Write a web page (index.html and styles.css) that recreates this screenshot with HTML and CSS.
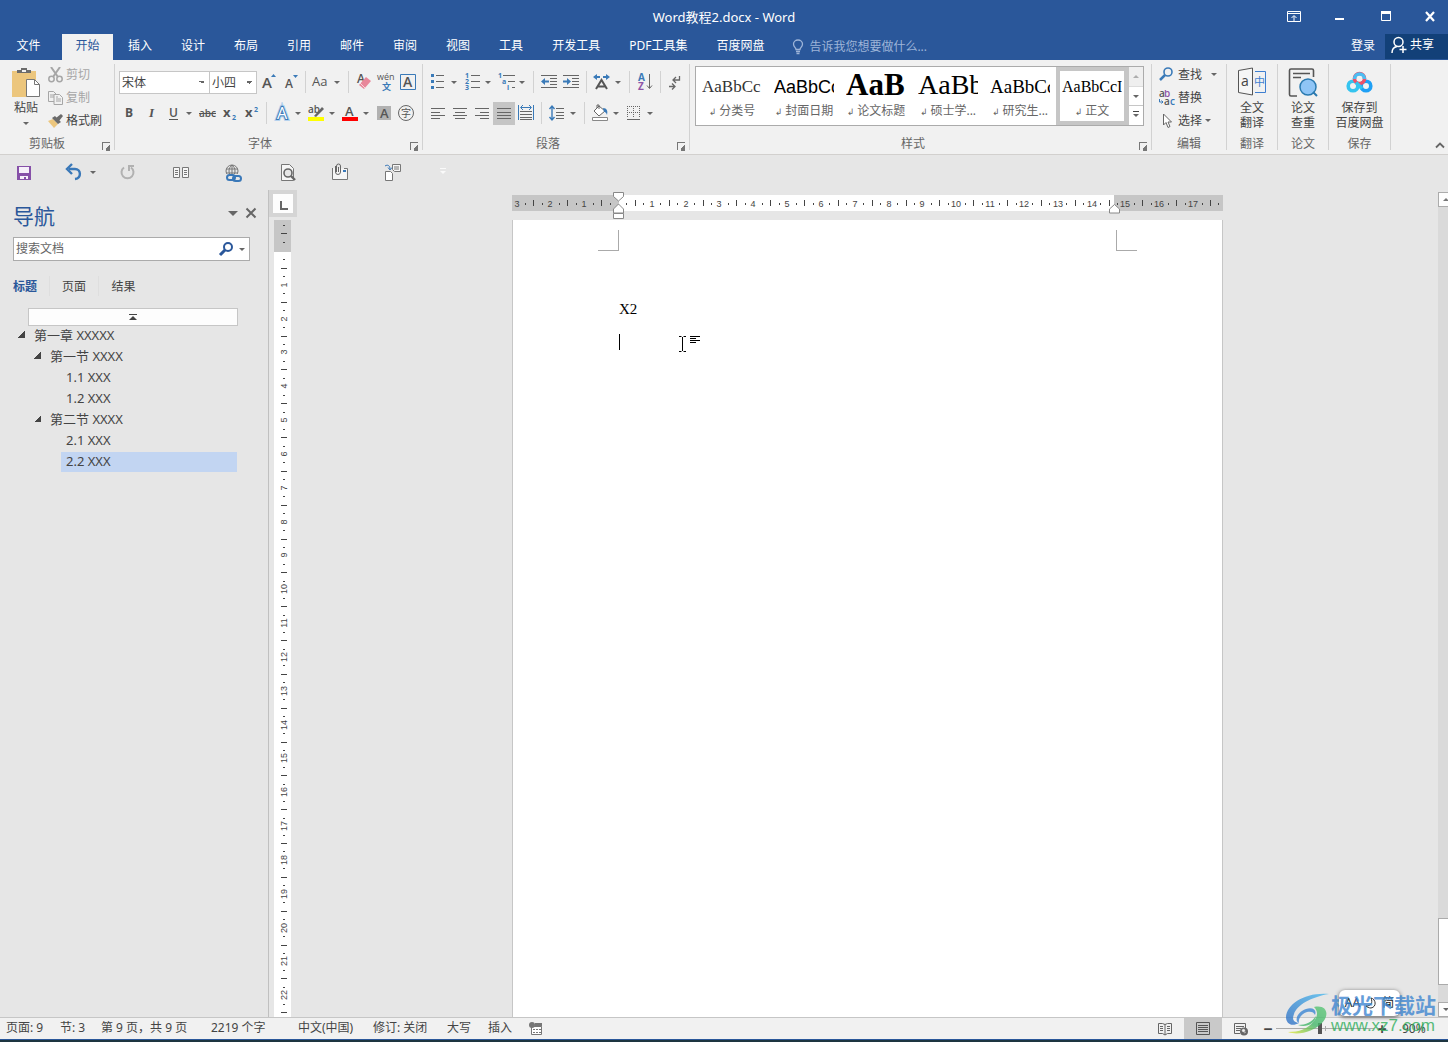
FILE: index.html
```html
<!DOCTYPE html>
<html lang="zh-CN">
<head>
<meta charset="utf-8">
<title>Word教程2.docx - Word</title>
<link rel="stylesheet" href="styles.css">
</head>
<body>
<header class="app-head">
  <div class="titlebar">
    <h1 class="doc-title">Word教程2.docx - Word</h1>
    <div class="win-buttons">
      <button class="win" aria-label="功能区显示选项"><svg width="14" height="12"><path d="M.5 .5h13v10h-13zM.5 2.5h13M7 10V5M4.500 7 7 4.500 9.500 7" fill="none" stroke="#fff"/></svg></button>
      <button class="win" aria-label="最小化"><svg width="10" height="12"><path d="M0 7h9v2H0z" fill="#fff"/></svg></button>
      <button class="win" aria-label="最大化"><svg width="11" height="12"><path d="M.5 .5h9v9h-9z" fill="none" stroke="#fff"/><path d="M0 0h10v3H0z" fill="#fff"/></svg></button>
      <button class="win" aria-label="关闭"><svg width="11" height="12"><path d="m1 1 8 9M9 1 1 10" stroke="#fff" stroke-width="2.200"/></svg></button>
    </div>
  </div>
  <nav class="tabs">
    <button class="tab tab-file">文件</button><button class="tab active">开始</button><button class="tab">插入</button><button class="tab">设计</button><button class="tab">布局</button><button class="tab">引用</button><button class="tab">邮件</button><button class="tab">审阅</button><button class="tab">视图</button><button class="tab">工具</button><button class="tab">开发工具</button><button class="tab">PDF工具集</button><button class="tab">百度网盘</button>
    <label class="tell"><svg width="12" height="16"><path d="M4 10.500C4 8.500 1.500 8 1.500 5a4.500 4 0 0 1 9 0c0 3-2.500 3.500-2.500 5.500zM4 12.500h4M4.500 14.500h3" fill="none" stroke="#9db4d8" stroke-width="1.300"/></svg><input type="text" placeholder="告诉我您想要做什么..."></label>
    <button class="tab login">登录</button>
    <button class="share"><svg width="16" height="18"><circle cx="7.500" cy="6" r="4.500" fill="none" stroke="#fff" stroke-width="1.500"/><path d="M1 17c0-4 2-6 5-6.500M12 10v7M8.500 13.500h7" fill="none" stroke="#fff" stroke-width="1.500"/></svg>共享</button>
  </nav>
</header>

<section class="ribbon">
  <div class="group g-clip">
    <div class="group-body clip">
      <button class="paste"><svg width="28" height="32"><path d="M0 4h24v26H0z" fill="#ecc67d"/><path d="M5 6V3h4V1h6v2h4v3z" fill="#6b6b6b"/><path d="M10 3h4v2h-4z" fill="#f1f1f1"/><path d="M14.500 12.500h8l5 5v12h-13z" fill="#fff" stroke="#777"/><path d="M22.500 12.500v5h5" fill="none" stroke="#777"/></svg><span>粘贴</span><i class="caret"></i></button>
      <div class="stack">
        <button class="line off"><svg width="15" height="16"><path d="m3 0 7 10M12 0 5 10" stroke="#a6a6a6" stroke-width="2"/><circle cx="3.500" cy="12" r="2.700" fill="none" stroke="#a6a6a6" stroke-width="1.500"/><circle cx="11.500" cy="12" r="2.700" fill="none" stroke="#a6a6a6" stroke-width="1.500"/></svg>剪切</button>
        <button class="line off"><svg width="15" height="16"><path d="M.5 1.500h5l3 3v7h-8zM2 5h4M2 7h4" fill="#f1f1f1" stroke="#a6a6a6"/><path d="M6 4.500h5.500l3 3v7H6zM8 9h5M8 11h5M8 7h2" fill="#f1f1f1" stroke="#a6a6a6"/></svg>复制</button>
        <button class="line"><svg width="15" height="16"><path d="m0 8 5-2 5 5-4 4z" fill="#ecc67d"/><path d="m4 5 3-2 6 6-3 2zM8 5l5-4 2 2-4 5z" fill="#6b6b6b"/></svg>格式刷</button>
      </div>
    </div>
    <footer class="cap">剪贴板<button class="launch" aria-label="剪贴板选项"></button></footer>
  </div>

  <div class="group g-font">
    <div class="group-body rows">
      <div class="row">
        <select class="combo c-name" aria-label="字体"><option>宋体</option></select><select class="combo c-size" aria-label="字号"><option>小四</option></select>
        <button class="ib" aria-label="增大字号"><svg class="i"><text x="5" y="17" class="gl" font-size="15">A</text><path d="m14 6 2.500-3L19 6z" fill="#3a7ab8"/></svg></button>
        <button class="ib" aria-label="减小字号"><svg class="i"><text x="6" y="17" class="gl" font-size="12">A</text><path d="m14 4 2.500 3L19 4z" fill="#3a7ab8"/></svg></button>
        <i class="sep"></i>
        <button class="ib" aria-label="更改大小写"><svg class="i"><text x="2" y="15" class="gl thin" font-size="13">Aa</text></svg></button><i class="dd"></i>
        <i class="sep"></i>
        <button class="ib" aria-label="清除格式"><svg class="i"><text x="4" y="12" class="gl" font-size="12">A</text><path d="m6 14 7-8 5 4-7 8z" fill="#e8879a"/><path d="m7 12 5 5" stroke="#f8d5dc"/></svg></button>
        <button class="ib" aria-label="拼音指南"><svg class="i"><text x="2" y="9" class="gl thin" font-size="9">wén</text><text x="7" y="19" font-size="9" font-weight="700" fill="#3a7ab8">文</text></svg></button>
        <button class="ib" aria-label="字符边框"><svg class="i"><path d="M3.500 3.500h15v15h-15z" fill="none" stroke="#3a7ab8"/><text x="6" y="16" class="gl" font-size="14">A</text></svg></button>
      </div>
      <div class="row">
        <button class="ib" aria-label="加粗"><svg class="i"><text x="7" y="15" class="gl heavy" font-size="12">B</text></svg></button>
        <button class="ib" aria-label="倾斜"><svg class="i"><text x="9" y="15" class="gl serif" font-size="13">I</text></svg></button>
        <button class="ib" aria-label="下划线"><svg class="i"><text x="7" y="15" class="gl" font-size="12">U</text><path d="M7 17.500h9" stroke="#555"/></svg></button><i class="dd"></i>
        <button class="ib" aria-label="删除线"><svg class="i"><text x="3" y="15" class="gl" font-size="10">abc</text><path d="M3 11.500h17" stroke="#555"/></svg></button>
        <button class="ib" aria-label="下标"><svg class="i"><text x="5" y="15" class="gl heavy" font-size="13">x</text><text x="14" y="18" font-size="7" font-weight="700" fill="#3a7ab8">2</text></svg></button>
        <button class="ib" aria-label="上标"><svg class="i"><text x="5" y="15" class="gl heavy" font-size="13">x</text><text x="14" y="10" font-size="7" font-weight="700" fill="#3a7ab8">2</text></svg></button>
        <i class="sep"></i>
        <button class="ib" aria-label="文本效果"><svg class="i"><text x="6" y="17" font-size="16" fill="#fff" stroke="#b5d2ee" stroke-width="4" paint-order="stroke">A</text><text x="6" y="17" font-size="16" fill="#fff" stroke="#3a7ab8" stroke-width="2" paint-order="stroke">A</text></svg></button><i class="dd"></i>
        <button class="ib" aria-label="突出显示"><svg class="i"><text x="3" y="11" class="gl" font-size="10">ab</text><path d="m9 14 8-9 2 2-8 8z" fill="#666"/><path d="M3 15h16v4H3z" fill="#ff0"/></svg></button><i class="dd"></i>
        <button class="ib" aria-label="字体颜色"><svg class="i"><text x="6" y="14" class="gl" font-size="13">A</text><path d="M3 15h16v4H3z" fill="red"/></svg></button><i class="dd"></i>
        <button class="ib" aria-label="字符底纹"><svg class="i"><path d="M4 4h14v14H4z" fill="#b1b1b1"/><text x="7" y="16" class="gl" font-size="13">A</text></svg></button>
        <button class="ib" aria-label="带圈字符"><svg class="i"><circle cx="11" cy="11" r="7.500" fill="none" stroke="#666"/><text x="6" y="15" class="gl thin" font-size="10">字</text></svg></button>
      </div>
    </div>
    <footer class="cap">字体<button class="launch" aria-label="字体选项"></button></footer>
  </div>

  <div class="group g-para">
    <div class="group-body rows">
      <div class="row">
        <button class="ib" aria-label="项目符号"><svg class="i"><path d="M4 3h3v3H4zM4 9h3v3H4zM4 15h3v3H4z" fill="#3a7ab8"/><path d="M9 4.500h8M9 10.500h8M9 16.500h8" stroke="#666"/></svg></button><i class="dd"></i>
        <button class="ib" aria-label="编号"><svg class="i"><g font-size="7" font-weight="700" fill="#3a7ab8"><text x="4" y="7">1</text><text x="4" y="13">2</text><text x="4" y="19">3</text></g><path d="M10 4.500h9M10 10.500h9M10 16.500h9" stroke="#666"/></svg></button><i class="dd"></i>
        <button class="ib" aria-label="多级列表"><svg class="i"><g font-size="7" font-weight="700" fill="#3a7ab8"><text x="3" y="7">1</text><text x="7" y="13">a</text><text x="12" y="19">i</text></g><path d="M8 4.500h12M13 10.500h7M17 16.500h3" stroke="#666"/></svg></button><i class="dd"></i>
        <i class="sep"></i>
        <button class="ib" aria-label="减少缩进"><svg class="i"><path d="M3 4.500h16M12 7.500h7M12 10.500h7M12 13.500h7M3 16.500h16" stroke="#666"/><path d="M3 10.500 7 7v2.500h4v2H7V14z" fill="#3a7ab8"/></svg></button>
        <button class="ib" aria-label="增加缩进"><svg class="i"><path d="M3 4.500h16M12 7.500h7M12 10.500h7M12 13.500h7M3 16.500h16" stroke="#666"/><path d="M11 10.500 7 7v2.500H3v2h4V14z" fill="#3a7ab8"/></svg></button>
        <i class="sep"></i>
        <button class="ib" aria-label="中文版式"><svg class="i"><path d="m5 18 5.500-9 5.500 9M7 15.500h7" fill="none" stroke="#555" stroke-width="2"/><path d="m2 6 4-3v2h3v2H6v2zM19 6l-4-3v2h-3v2h3v2z" fill="#3a7ab8"/></svg></button><i class="dd"></i>
        <i class="sep"></i>
        <button class="ib" aria-label="排序"><svg class="i"><text x="4" y="10" font-size="10" font-weight="700" fill="#3a7ab8">A</text><text x="4" y="19" font-size="10" font-weight="700" fill="#8f55a8">Z</text><path d="M15.500 3v14M13 14.500l2.500 3 2.500-3" fill="none" stroke="#666"/></svg></button>
        <i class="sep"></i>
        <button class="ib" aria-label="显示编辑标记"><svg class="i"><path d="M14.500 5v4H8M11 6 8 9l3 3M4 15.500h6M7 12.500l3 3-3 3" fill="none" stroke="#666" stroke-width="1.300"/></svg></button>
      </div>
      <div class="row">
        <button class="ib" aria-label="左对齐"><svg class="i"><path d="M4 6.500h14M4 10.500h9M4 13.500h14M4 16.500h9" stroke="#666"/></svg></button>
        <button class="ib" aria-label="居中"><svg class="i"><path d="M4 6.500h14M6 10.500h10M4 13.500h14M6 16.500h10" stroke="#666"/></svg></button>
        <button class="ib" aria-label="右对齐"><svg class="i"><path d="M4 6.500h14M9 10.500h9M4 13.500h14M9 16.500h9" stroke="#666"/></svg></button>
        <button class="ib on" aria-label="两端对齐"><svg class="i"><path d="M4 6.500h14M4 10.500h14M4 13.500h14M4 16.500h14" stroke="#666"/></svg></button>
        <button class="ib" aria-label="分散对齐"><svg class="i"><path d="M3.500 3v15M18.500 3v15" stroke="#3a7ab8"/><path d="M5 9.500h12M5 12.500h12M5 15.500h12M5 17.500h12" stroke="#666"/><path d="M6 5.500h10M8 3 5.500 5.500 8 8M14 3l2.500 2.500L14 8" fill="none" stroke="#3a7ab8"/></svg></button>
        <i class="sep"></i>
        <button class="ib" aria-label="行距"><svg class="i"><path d="M10 6.500h8M10 10.500h8M10 13.500h8M10 16.500h8" stroke="#666"/><path d="M6 4v14M3.500 7 6 4l2.500 3M3.500 15 6 18l2.500-3" fill="none" stroke="#3a7ab8" stroke-width="1.400"/></svg></button><i class="dd"></i>
        <i class="sep"></i>
        <button class="ib" aria-label="底纹"><svg class="i"><path d="m5 9 5-5 6 5-6 5z" fill="#fff" stroke="#666"/><path d="M8 6V3h2v4" fill="none" stroke="#666"/><path d="M14 6c4 0 5 3 4 7-1-3-2-3-3-3z" fill="#3a7ab8"/><path d="M3.500 15.500h15v3h-15z" fill="#fff" stroke="#888"/></svg></button><i class="dd"></i>
        <button class="ib" aria-label="边框"><svg class="i"><path d="M4 4.500h13M4 10.500h13M4.500 4v12M10.500 4v12M16.500 4v12" stroke="#666" stroke-dasharray="1 1"/><path d="M4 17.500h13" stroke="#666"/></svg></button><i class="dd"></i>
      </div>
    </div>
    <footer class="cap">段落<button class="launch" aria-label="段落选项"></button></footer>
  </div>

  <div class="group g-style">
    <div class="gallery">
      <button class="style"><span class="pv p1">AaBbCc</span><span class="nm"><b>↲</b>分类号</span></button>
      <button class="style"><span class="pv p2">AaBbCc</span><span class="nm"><b>↲</b>封面日期</span></button>
      <button class="style"><span class="pv p3">AaB</span><span class="nm"><b>↲</b>论文标题</span></button>
      <button class="style"><span class="pv p4">AaBb</span><span class="nm"><b>↲</b>硕士学...</span></button>
      <button class="style"><span class="pv p5">AaBbCc</span><span class="nm"><b>↲</b>研究生...</span></button>
      <button class="style chosen"><span class="pv p6">AaBbCcI</span><span class="nm"><b>↲</b>正文</span></button>
      <div class="gal-nav"><button class="dim" aria-label="上一行"><i class="caret up"></i></button><button aria-label="下一行"><i class="caret"></i></button><button aria-label="更多样式"><i class="caret bar"></i></button></div>
    </div>
    <footer class="cap">样式<button class="launch" aria-label="样式选项"></button></footer>
  </div>

  <div class="group g-edit">
    <div class="group-body stack">
      <button class="line"><svg width="16" height="16"><circle cx="9" cy="5" r="4" fill="none" stroke="#3a7ab8" stroke-width="1.600"/><path d="m6 8-5 5" stroke="#3a7ab8" stroke-width="2.500"/></svg>查找<i class="caret far"></i></button>
      <button class="line"><svg width="16" height="16"><g font-size="10" font-weight="600"><text x="0" y="7" fill="#555">a</text><text x="5" y="7" fill="#8f55a8">b</text><text x="5" y="15" fill="#555">a</text><text x="11" y="15" fill="#3a7ab8">c</text></g><path d="M.5 9v3H4M2.500 10.500 4 12l-1.500 1.500" fill="none" stroke="#3a7ab8"/></svg>替换</button>
      <button class="line"><svg width="16" height="16"><path d="M4.500 1v11l2.500-2.500 2 5 2-1-2-4.500h3.500z" fill="#fff" stroke="#666"/></svg>选择<i class="caret"></i></button>
    </div>
    <footer class="cap">编辑</footer>
  </div>
  <div class="group g-tool">
    <button class="big"><svg width="30" height="30"><path d="M1.500 3.500 15.500 1v27l-14-2.500z" fill="#f6f6f6" stroke="#555"/><text x="4" y="19" font-size="14" fill="#444">a</text><path d="M18 4.500h10.500v21H18" fill="none" stroke="#3f7fd0"/><text x="17" y="19" font-size="11" fill="#3f7fd0">中</text></svg><span>全文<br>翻译</span></button>
    <footer class="cap">翻译</footer>
  </div>
  <div class="group g-tool">
    <button class="big"><svg width="30" height="30"><path d="M9 29H3a1.500 1.500 0 0 1-1.500-1.500v-24A1.500 1.500 0 0 1 3 2h21a1.500 1.500 0 0 1 1.500 1.500V10M5 6.500h17M5 10.500h8" fill="none" stroke="#555" stroke-width="1.600"/><circle cx="20" cy="20" r="8" fill="#8fc5f6" stroke="#2a7ab0" stroke-width="1.500"/><path d="m25 25 4 4" stroke="#2a7ab0" stroke-width="2"/></svg><span>论文<br>查重</span></button>
    <footer class="cap">论文</footer>
  </div>
  <div class="group g-save">
    <button class="big"><svg width="30" height="30"><g fill="none" stroke-width="3.600"><circle cx="8" cy="19" r="4.800" stroke="#35c4ef"/><circle cx="21" cy="19" r="4.800" stroke="#1fa0f5"/><circle cx="14.500" cy="11.500" r="5" stroke="#ef5068"/><path d="M9.500 12a5 5 0 0 1 10 0" stroke="#4cbdf2"/><path d="m11 15.500 6 6" stroke="#35c4ef"/></g></svg><span>保存到<br>百度网盘</span></button>
    <footer class="cap">保存</footer>
  </div>
  <button class="collapse" aria-label="折叠功能区"><svg width="10" height="7"><path d="m1 5.500 4-4 4 4" fill="none" stroke="#666" stroke-width="1.800"/></svg></button>
</section>

<div class="quick">
  <button class="q" aria-label="保存"><svg width="20" height="20"><path d="M3 3h14v14H3z" fill="#8650a8"/><path d="M5 4h10v6H5zM6 13h8v3h-2v-2h-2v2H6z" fill="#f6f0fa"/></svg></button>
  <button class="q" aria-label="撤消"><svg width="20" height="20"><path d="M5 6h6c6 0 7 9 0 10" fill="none" stroke="#3a78b8" stroke-width="2.400"/><path d="M8 1 3 6l5 5" fill="none" stroke="#3a78b8" stroke-width="2.400"/></svg><i class="caret"></i></button>
  <button class="q" aria-label="恢复"><svg width="20" height="20"><path d="M7 4.500a6 6 0 1 0 7 0" fill="none" stroke="#b1b1b1" stroke-width="2"/><path d="M11 3h6M12 3v5" fill="none" stroke="#b1b1b1" stroke-width="2"/></svg></button>
  <button class="q" aria-label="双页"><svg width="20" height="20"><path d="M3.500 4.500h6v10h-6zM12.500 4.500h6v10h-6z" fill="#f6f6f6" stroke="#777"/><path d="M5 7.500h3M5 9.500h3M5 11.500h3M14 7.500h3M14 9.500h3M14 11.500h3" stroke="#777"/></svg></button>
  <button class="q" aria-label="超链接"><svg width="20" height="20"><circle cx="9" cy="8" r="6" fill="none" stroke="#777"/><path d="M3 6h12M3 10h12M9 2v12M9 2c-4 3-4 9 0 12M9 2c4 3 4 9 0 12" fill="none" stroke="#777"/><path d="M3 11h16v8H3z" fill="#e6e6e6"/><rect x="4" y="12" width="8" height="5" rx="2.500" fill="none" stroke="#3a78b8" stroke-width="2"/><rect x="10" y="13" width="8" height="5" rx="2.500" fill="none" stroke="#3a78b8" stroke-width="2"/></svg></button>
  <button class="q" aria-label="打印预览"><svg width="20" height="20"><path d="M5.500 1.500h8l4 4v12h-12z" fill="#f6f6f6" stroke="#777"/><circle cx="12" cy="10" r="4" fill="#e6e6e6" stroke="#666" stroke-width="1.600"/><path d="m15 13 4 4" stroke="#666" stroke-width="2.400"/></svg></button>
  <button class="q" aria-label="附件"><svg width="20" height="20"><path d="M3.500 5v11.500h15V5.500H15" fill="#f6f6f6" stroke="#777"/><path d="M6.500 3v6a2.500 2.500 0 0 0 5 0V3a2 2 0 0 0-4 0v6M9.500 4v5" fill="none" stroke="#666"/><path d="M14 7h3v2h-3z" fill="#3a78b8"/></svg></button>
  <button class="q" aria-label="切换窗口"><svg width="20" height="20"><path d="M3.500 8.500h5l2 2v7h-7z" fill="#fff" stroke="#777"/><path d="M10.500 1.500h8v7h-6l-2-2zM12 4h5M12 6h5" fill="#f6f6f6" stroke="#777"/><path d="M3 3c3-2 5 0 5 3M6 4.500 8 7l2-2.500" fill="none" stroke="#3a78b8"/></svg></button>
  <button class="q more" aria-label="自定义快速访问工具栏"><i class="caret bar"></i></button>
</div>

<main class="work">
  <aside class="nav">
    <div class="nav-head"><h2>导航</h2><button aria-label="任务窗格选项"><i class="caret wide"></i></button><button aria-label="关闭"><svg width="12" height="12"><path d="m1.500 1.500 9 9M10.500 1.500l-9 9" stroke="#666" stroke-width="2"/></svg></button></div>
    <div class="search"><input type="text" placeholder="搜索文档" aria-label="搜索文档"><button aria-label="搜索"><svg width="16" height="16"><circle cx="10" cy="6" r="4" fill="none" stroke="#2a579a" stroke-width="2"/><path d="m7 9-5 5" stroke="#2a579a" stroke-width="3"/></svg><i class="caret"></i></button></div>
    <div class="nav-tabs"><button class="cur">标题</button><button>页面</button><button>结果</button></div>
    <button class="jump" aria-label="跳转到文档开头"><svg width="8" height="8"><path d="M0 1.500h8" stroke="#444"/><path d="m0 7 4-4 4 4z" fill="#444"/></svg></button>
    <ul class="tree">
      <li class="l1"><i class="tri"></i><a href="#c1">第一章 XXXXX</a></li>
      <li class="l2"><i class="tri"></i><a href="#c1">第一节 XXXX</a></li>
      <li class="l3"><a href="#c1">1.1 XXX</a></li>
      <li class="l3"><a href="#c1">1.2 XXX</a></li>
      <li class="l2"><i class="tri"></i><a href="#c1">第二节 XXXX</a></li>
      <li class="l3"><a href="#c1">2.1 XXX</a></li>
      <li class="l3 sel"><a href="#c1">2.2 XXX</a></li>
    </ul>
  </aside>
  <div class="vcol">
    <button class="tabstop" aria-label="制表符"><svg width="20" height="19"><path d="M8 7v8h7" fill="none" stroke="#666" stroke-width="2"/></svg></button>
    <div class="vruler"><svg id="vr"></svg></div>
  </div>
  <div class="doc">
    <div class="hruler"><svg id="hr"></svg>
      <svg class="mark first" width="11" height="28"><path d="M.5 .5h10v4L5.500 9 .5 4.500zM5.500 12l5 5v4H.5v-4zM.5 21.500h10v5H.5z" fill="#fff" stroke="#888"/></svg>
      <svg class="mark last" width="11" height="10"><path d="M5.500 .5l5 4.500v4H.5V5z" fill="#fff" stroke="#888"/></svg>
    </div>
    <article class="page" id="c1">
      <div class="crops"><i class="crop cl"></i><i class="crop cr"></i></div>
      <p>X2</p>
      <p><i class="caret-line"></i></p>
      <svg class="pointer" width="23" height="18"><path d="M1 1.500h2.500M5.500 1.500H8M4.500 2v14M1 16.500h2.500M5.500 16.500H8M12 1.500h10M12 3.500h6M12 5.500h10M12 7.500h6" stroke="#000"/></svg>
    </article>
  </div>
  <div class="vscroll"><button aria-label="向上滚动"><i class="caret up"></i></button><div class="track"><div class="thumb"></div></div><button aria-label="向下滚动"><i class="caret"></i></button></div>
</main>

<footer class="status">
  <span class="s1">页面: 9</span><span class="s2">节: 3</span><span class="s3">第 9 页，共 9 页</span><span class="s4">2219 个字</span><span class="s5">中文(中国)</span><span class="s6">修订: 关闭</span><span class="s2">大写</span><span class="s2">插入</span>
  <button aria-label="宏"><svg width="14" height="14"><path d="M2.500 4.500h10v8h-10zM6 1.500h6.500v3" fill="#fff" stroke="#777"/><path d="M6 1h7v3H6z" fill="#777"/><circle cx="3" cy="3" r="3" fill="#777"/><path d="M4 7.500h8M4 10.500h8" stroke="#777" stroke-dasharray="2 1"/></svg></button>
  <div class="views">
    <button class="view" aria-label="阅读视图"><svg width="14" height="14"><path d="M.5 1.500h4l2.500 1 2.500-1h4v10h-4L7 13l-2.500-1.500h-4zM7 2v11M2 4.500h3M2 6.500h3M2 8.500h3M9 4.500h3M9 6.500h3M9 8.500h3" fill="none" stroke="#666"/></svg></button>
    <button class="view on" aria-label="页面视图"><svg width="14" height="14"><path d="M.5 .5h13v12H.5zM2 3.500h10M2 5.500h10M2 7.500h10M2 9.500h10" fill="none" stroke="#555"/></svg></button>
    <button class="view" aria-label="Web 版式视图"><svg width="14" height="14"><path d="M6 11.500H.5V1.500h11V6M2 4.500h8M2 6.500h5M2 8.500h4" fill="none" stroke="#666"/><circle cx="10" cy="9.500" r="4" fill="#666"/><path d="m8 8 2-1 1 2-2 1zM10 11l2-1" stroke="#f1f1f1" stroke-width=".6" fill="#f1f1f1"/></svg></button>
  </div>
  <div class="zoom"><button aria-label="缩小">−</button><input type="range" min="10" max="200" value="95" aria-label="缩放"><button aria-label="放大">+</button><output>90%</output></div>
</footer>
<div class="desk"></div>

<div class="ime"><span>AA</span><svg width="12" height="12"><path d="M6 1c5 1 6 9 0 10-2 0-4-1-5-2 5 0 7-3 5-8z" fill="none" stroke="#333"/></svg><span>简</span></div>
<div class="mark-site">
  <svg width="46" height="44"><defs><linearGradient id="b" x1="0" y1="1" x2="1" y2="0"><stop offset="0" stop-color="#2f6fc4"/><stop offset="1" stop-color="#4fbdf0"/></linearGradient><linearGradient id="g" x1="0" y1="1" x2="1" y2="0"><stop offset="0" stop-color="#e8ea3c"/><stop offset=".5" stop-color="#43b66a"/><stop offset="1" stop-color="#5cc878"/></linearGradient></defs><path d="M44 2C20 0 2 12 1 25c0 7 6 10 13 6-6-1-7-4-5-9C12 13 26 5 44 2z" fill="url(#b)"/><path d="M14 31c-5-2-2-11 7-14 7-2 11 1 9 6-1-3-4-4-8-3-6 2-9 7-8 11z" fill="#3c86d4"/><path d="M29 15c13-3 16 8 8 16C29 39 14 44 3 40c11 0 20-3 26-11 4-5 4-10 0-14z" fill="url(#g)"/><path d="M13 33c8 0 14-3 18-9-1 8-10 12-18 9z" fill="#43b66a"/></svg>
  <div><strong>极光下载站</strong><em>www.xz7.com</em></div>
</div>
<script src="rulers.js"></script>
</body>
</html>
```
FILE: styles.css
```css
* { box-sizing: border-box; }
body { margin: 0; height: 100vh; display: flex; flex-direction: column; overflow: hidden; background: #e6e6e6; color: #444; font: 12px/16px "Noto Sans", "Noto Sans CJK SC", sans-serif; position: relative; }
button, input, select { font: inherit; color: inherit; border: 0; background: none; padding: 0; margin: 0; }
button { display: flex; align-items: center; justify-content: center; white-space: nowrap; }
svg { display: block; flex: none; }
svg text { font-family: "Open Sans", "Noto Sans CJK SC", sans-serif; }
h1, h2, p, ul { margin: 0; padding: 0; font-weight: 400; }

/* title bar and tabs */
.app-head { background: #2a579a; color: #fff; }
.titlebar { height: 34px; display: grid; grid-template-columns: 1fr auto 1fr; align-items: center; }
.doc-title { grid-column: 2; font-size: 13px; line-height: 34px; }
.win-buttons { display: flex; justify-content: flex-end; gap: 6px; }
.win { width: 40px; height: 32px; }
.win:last-child { width: 36px; }
.tabs { display: flex; height: 26px; }
.tab { padding: 0 14px 3px 15px; min-width: 53px; }
.tab-file { width: 62px; padding-right: 20px; }
.tab.active { background: #f1f1f1; color: #2a579a; width: 51px; min-width: 0; padding: 0 0 3px; }
.tell { display: flex; align-items: center; gap: 5px; margin-left: 14px; flex: 1; }
.tell input { width: 200px; }
.tell input::placeholder { color: #9db4d8; opacity: 1; }
.login { padding: 0 10px 3px; min-width: 0; }
.share { background: #124078; width: 63px; gap: 3px; padding: 0 6px 4px; height: 25px; justify-content: flex-start; }

/* ribbon */
.ribbon { display: flex; height: 95px; background: #f1f1f1; border-bottom: 1px solid #d2d0ce; padding-top: 4px; }
.group { display: flex; flex-direction: column; height: 86px; border-right: 1px solid #d2d2d2; flex: none; position: relative; }
.g-clip { width: 115px; }
.g-font { width: 308px; padding-left: 3px; }
.g-para { width: 267px; padding-left: 4px; }
.g-style { width: 462px; padding-left: 5px; }
.g-edit { width: 75px; padding-left: 7px; }
.g-tool { width: 51px; }
.g-save { width: 62px; }
.cap { margin-top: auto; height: 14px; padding-top: 2px; display: flex; align-items: center; justify-content: center; color: #666; }
.g-clip .cap, .g-font .cap, .g-para .cap, .g-style .cap { padding-right: 20px; }
.g-edit .cap { padding-right: 7px; }
.launch { position: absolute; right: 4px; bottom: 0; width: 8px; height: 8px; border: solid #777; border-width: 1px 0 0 1px; }
.launch::after { content: ""; width: 5px; height: 5px; margin: 3px 0 0 3px; background: linear-gradient(135deg, transparent 40%, #777 40%); border: solid #777; border-width: 0 1px 1px 0; }
.clip { display: flex; }
.paste { width: 48px; flex-direction: column; justify-content: flex-start; padding: 3px 0 0 4px; height: 66px; gap: 1px; }
.paste .caret { margin-top: 5px; }
.stack { display: flex; flex-direction: column; margin-top: -1px; }
.line { height: 23px; gap: 3px; justify-content: flex-start; }
.off { color: #a6a6a6; }
.caret { width: 0; height: 0; border: solid transparent; border-width: 3px 3px 0; border-top-color: #666; display: block; }
.caret.up { border-width: 0 3px 3px; border-bottom-color: #777; }
.caret.wide { border-width: 5px 5px 0; }
.caret.far { margin-left: 6px; }
.caret.bar { position: relative; }
.caret.bar::before { content: ""; position: absolute; left: -3px; top: -6px; width: 6px; height: 1px; background: currentColor; }
.rows { display: flex; flex-direction: column; gap: 9px; padding-top: 7px; }
.row { display: flex; height: 22px; align-items: center; }
.i { width: 22px; height: 22px; }
.gl { font-weight: 600; fill: #555; }
.gl.thin { font-weight: 400; }
.gl.heavy { font-weight: 700; }
.gl.serif { font-family: "Liberation Serif", serif; font-style: italic; font-weight: 700; }
.ib { width: 22px; height: 23px; }
.ib.on { background: #c5c5c5; }
.dd { width: 12px; padding-left: 2px; }
.dd::after { content: ""; display: block; width: 0; border: solid transparent; border-width: 3px 3px 0; border-top-color: #666; }
.sep { width: 1px; height: 22px; background: #d2d2d2; margin: 0 4px; }
.combo { appearance: none; height: 23px; border: 1px solid #c6c6c6; background: linear-gradient(45deg, transparent 50%, #666 50%) right 7px center / 3px 3px no-repeat, linear-gradient(-45deg, transparent 50%, #666 50%) right 4px center / 3px 3px no-repeat, #fff; padding: 2px 0 0 2px; margin-left: 1px; }
.c-name { width: 91px; }
.c-size { width: 48px; margin-left: -1px; }
.gallery { display: flex; width: 449px; height: 60px; margin-top: 2px; border: 1px solid #ababab; background: #fff; }
.style { width: 72px; flex-direction: column; padding: 1px 6px; justify-content: flex-start; }
.chosen { border: 4px solid #c6c6c6; padding: 0 2px; }
.style .pv { width: 60px; overflow: hidden; color: #000; height: 35px; line-height: 38px; text-align: left; }
.chosen .pv { height: 32px; line-height: 32px; }
.nm { color: #666; display: flex; gap: 3px; }
.nm b { font: 9px/18px "DejaVu Sans", sans-serif; }
.p1, .p3, .p4, .p5, .p6 { font-family: "Liberation Serif", serif; }
.style .p1 { font-size: 17px; color: #333; }
.p2 { font-family: "Liberation Sans", sans-serif; font-size: 18px; }
.p3 { font-size: 31px; font-weight: 700; }
.p4 { font-size: 28px; }
.p5 { font-size: 19px; }
.p6 { font-size: 16px; }
.style .p3, .style .p4 { line-height: 34px; }
.gal-nav { flex: 1; display: flex; flex-direction: column; border-left: 1px solid #c6c6c6; }
.gal-nav button { flex: 1; border-bottom: 1px solid #c6c6c6; }
.gal-nav button:last-child { border: 0; }
.gal-nav .dim { background: #e6e6e6; opacity: .6; }
.big { flex-direction: column; padding-top: 3px; line-height: 15px; gap: 3px; }
.collapse { margin: auto 3px 5px auto; }

/* quick access toolbar */
.quick { display: flex; height: 35px; align-items: center; padding-left: 14px; }
.q { width: 53px; justify-content: flex-start; gap: 6px; }
.more { color: #fafafa; padding-left: 5px; }
.more .caret { border-top-color: #fafafa; }
.q:first-child { width: 50px; }

/* work area */
.work { flex: 1; min-height: 0; display: flex; }
.nav { width: 269px; border-right: 1px solid #c0c0c0; padding: 13px 11px 0 13px; flex: none; }
.nav-head { display: flex; align-items: flex-start; height: 26px; gap: 7px; }
.nav-head button { height: 20px; }
.nav-head h2 { flex: 1; font-size: 21px; line-height: 26px; color: #2a579a; }
.search { display: flex; width: 237px; height: 24px; margin-top: 8px; border: 1px solid #ababab; background: #fff; }
.search input { flex: 1; min-width: 0; padding-left: 2px; }
.search input::placeholder { color: #666; opacity: 1; }
.search button { gap: 5px; padding-right: 4px; }
.nav-tabs { display: flex; margin-top: 15px; height: 20px; }
.nav-tabs button { width: 49px; justify-content: center; border-right: 1px solid #dedede; padding-top: 2px; }
.nav-tabs button:first-child { width: 37px; justify-content: flex-start; }
.nav-tabs button:last-child { border: 0; }
.nav-tabs .cur { color: #2a579a; font-weight: 700; }
.jump { width: 210px; height: 18px; margin: 12px 0 0 15px; border: 1px solid #c6c6c6; background: #fdfdfd; }
.tree { list-style: none; width: 224px; font-size: 13px; }
.tree li { height: 21px; display: flex; align-items: center; gap: 9px; padding-bottom: 4px; }
.tree a { color: #444; text-decoration: none; }
.l1 { padding-left: 5px; }
.l2 { padding-left: 21px; }
.tree .l3 { margin-left: 48px; padding-left: 5px; }
.tree .sel { background: #c2d5f2; height: 20px; padding-bottom: 2px; }
.tri { width: 7px; height: 7px; background: linear-gradient(135deg, transparent 50%, #444 50%); }
.vcol { width: 28px; flex: none; display: flex; flex-direction: column; }
.tabstop { width: 28px; height: 27px; background: #d5d5d5; }
.tabstop svg { background: #fdfdfd; }
.vruler { margin: 3px 0 0 5px; width: 17px; flex: 1; min-height: 0; overflow: hidden; background: linear-gradient(#c6c6c6 32px, #fff 32px); }
.vruler svg { width: 17px; height: 100%; }
.vruler text, .hruler text { font: 9px "Liberation Sans", sans-serif; fill: #444; text-anchor: middle; }
.doc { flex: 1; min-width: 0; display: flex; flex-direction: column; align-items: center; }
.hruler { width: 711px; height: 16px; margin: 5px 0 9px; background: linear-gradient(90deg, #c6c6c6 107px, #fff 107px, #fff 602px, #c6c6c6 602px); position: relative; flex: none; }
.hruler > svg:first-child { width: 711px; height: 16px; }
.mark { position: absolute; }
.first { left: 101px; top: -3px; }
.last { left: 597px; top: 9px; }
.page { width: 711px; flex: 1; background: #fff; border: solid #c6c6c6; border-width: 0 1px; padding: 10px 85px 0; position: relative; font: 15px/30px "Liberation Serif", serif; color: #000; }
.crops { display: flex; justify-content: space-between; height: 64px; }
.crop { width: 21px; height: 21px; border: solid #aaa; border-width: 0 0 1px; }
.cl { border-right-width: 1px; }
.cr { border-left-width: 1px; }
.page p { padding-left: 21px; height: 33px; }
.page p + p { padding-top: 7px; }
.caret-line { display: block; width: 1px; height: 16px; background: #000; }
.pointer { position: absolute; left: 165px; top: 115px; }
.vscroll { width: 10px; display: flex; flex-direction: column; padding-top: 2px; overflow: hidden; }
.vscroll button { height: 15px; width: 15px; border: 1px solid #ababab; background: #fdfdfd; flex: none; }
.track { flex: 1; background: #dadada; display: flex; flex-direction: column; justify-content: flex-end; padding-bottom: 17px; }
.thumb { height: 67px; border: 1px solid #ababab; border-right: 0; background: #fff; }

/* status bar */
.status { display: flex; align-items: center; height: 22px; background: #f1f1f1; border-top: 1px solid #c6c6c6; padding-left: 6px; flex: none; white-space: nowrap; }
.status > span { padding-bottom: 2px; }
.s1 { width: 54px; } .s2 { width: 41px; } .s3 { width: 110px; } .s4 { width: 87px; } .s5 { width: 75px; } .s6 { width: 74px; }
.views { margin-left: auto; display: flex; align-self: stretch; }
.view { width: 38px; }
.view.on { background: #c9c9c9; }
.zoom { display: flex; align-items: center; gap: 2px; margin-left: 2px; width: 186px; }
.zoom button { width: 12px; font-size: 16px; font-weight: 700; }
.zoom input { appearance: none; width: 98px; height: 12px; background: linear-gradient(#aaa, #aaa) center / 100% 1px no-repeat, linear-gradient(#aaa, #aaa) center / 1px 5px no-repeat; }
.zoom input::-webkit-slider-thumb { appearance: none; width: 4px; height: 11px; background: #555; }
.zoom output { margin-left: 12px; }
.desk { height: 3px; background: linear-gradient(#2a579a 1px, #1d3540 1px); flex: none; }

/* overlays */
.ime { position: absolute; right: 48px; bottom: 26px; width: 61px; height: 26px; border-radius: 6px; background: #fff; box-shadow: 0 1px 4px #555; display: flex; align-items: center; justify-content: center; gap: 5px; color: #222; }
.mark-site { position: absolute; right: 12px; bottom: 6px; display: flex; opacity: .8; white-space: nowrap; }
.mark-site strong { display: block; font: 700 21px/24px "Noto Sans CJK SC", sans-serif; color: #3f86d0; }
.mark-site em { display: block; font: 400 17px/20px "Liberation Sans", sans-serif; color: #2fae5c; }
```
FILE: rulers.js
```js
// Draw centimetre rulers at 90% zoom.
const CM = 33.83;
const NS = "http://www.w3.org/2000/svg";
function add(svg, tag, attrs, text) {
  const el = document.createElementNS(NS, tag);
  for (const key in attrs) el.setAttribute(key, attrs[key]);
  if (text) el.textContent = text;
  svg.appendChild(el);
}
function ruler(svg, zero, from, to, vertical) {
  for (let n = from; n <= to; n++) {
    const at = q => Math.round(zero + (n + q) * CM);
    if (n !== 0) {
      const p = at(0);
      add(svg, "text", vertical ? { transform: `translate(13 ${p}) rotate(-90)` } : { x: p, y: 12 }, String(Math.abs(n)));
    }
    for (const [q, len] of [[0.25, 1], [0.5, 6], [0.75, 1]]) {
      const p = at(q), s = 8 - Math.floor(len / 2);
      add(svg, "rect", vertical
        ? { x: len > 1 ? 7 : 9, y: p, width: Math.max(len, 2), height: 1, fill: "#444" }
        : { x: p, y: s, width: 1, height: Math.max(len, 2), fill: "#444" });
    }
  }
}
const vr = document.getElementById("vr");
const visible = Math.floor((vr.parentNode.clientHeight - 38) / CM);
ruler(document.getElementById("hr"), 106, -3, 17, false);
ruler(vr, 31, 0, visible, true);
// The strip above the top margin carries ticks only.
for (const [y, len] of [[5, 2], [13, 6], [22, 2]]) {
  add(vr, "rect", { x: len > 2 ? 7 : 9, y, width: len, height: 1, fill: "#444" });
}
```
